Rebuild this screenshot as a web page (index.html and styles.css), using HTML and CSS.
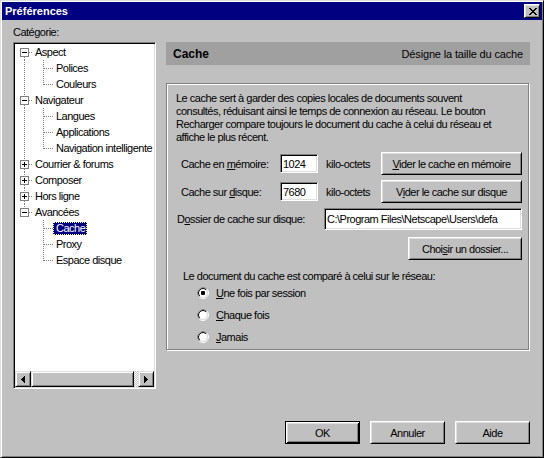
FILE: index.html
```html
<!DOCTYPE html>
<html lang="fr">
<head>
<meta charset="utf-8">
<title>Préférences</title>
<link rel="stylesheet" href="styles.css">
</head>
<body>
<svg class="defs" width="0" height="0" aria-hidden="true">
  <defs>
    <clipPath id="tl"><polygon points="0,0 12,0 0,12"/></clipPath>
    <symbol id="radio" viewBox="0 0 12 12">
      <circle cx="6" cy="6" r="5.5" fill="none" stroke="#fff"/>
      <circle cx="6" cy="6" r="5.5" fill="none" stroke="#808080" clip-path="url(#tl)"/>
      <circle cx="6" cy="6" r="4.5" fill="#fff" stroke="#dfdfdf"/>
      <circle cx="6" cy="6" r="4.5" fill="none" stroke="#000" clip-path="url(#tl)"/>
    </symbol>
  </defs>
</svg>
<div class="window">
  <div class="titlebar">
    <span class="title">Préférences</span>
    <span class="close"><svg width="8" height="7" viewBox="0 0 8 7" shape-rendering="crispEdges"><path d="M0 0h2v1H0zM6 0h2v1H6zM1 1h2v1H1zM5 1h2v1H5zM2 2h4v1H2zM3 3h2v1H3zM2 4h4v1H2zM1 5h2v1H1zM5 5h2v1H5zM0 6h2v1H0zM6 6h2v1H6z" fill="#000"/></svg></span>
  </div>
  <div class="main">
    <div class="cat-label">Catégorie:</div>
    <div class="tree">
      <div class="rows">
        <div class="row"><svg class="g1" width="17" height="16" shape-rendering="crispEdges"><line x1="9.5" y1="13" x2="9.5" y2="16" class="dot"/><line x1="14" y1="8.5" x2="17" y2="8.5" class="dot"/><rect x="5.5" y="4.5" width="8" height="8" fill="#fff" stroke="#808080"/><rect x="7" y="8" width="5" height="1"/></svg><span class="lbl">Aspect</span></div>
        <div class="row"><svg class="g2" width="38" height="16" shape-rendering="crispEdges"><line x1="9.5" y1="0" x2="9.5" y2="16" class="dot"/><line x1="28.5" y1="0" x2="28.5" y2="16" class="dot"/><line x1="29" y1="8.5" x2="38" y2="8.5" class="dot"/></svg><span class="lbl">Polices</span></div>
        <div class="row"><svg class="g2" width="38" height="16" shape-rendering="crispEdges"><line x1="9.5" y1="0" x2="9.5" y2="16" class="dot"/><line x1="28.5" y1="0" x2="28.5" y2="9" class="dot"/><line x1="29" y1="8.5" x2="38" y2="8.5" class="dot"/></svg><span class="lbl">Couleurs</span></div>
        <div class="row"><svg class="g1" width="17" height="16" shape-rendering="crispEdges"><line x1="9.5" y1="0" x2="9.5" y2="4" class="dot"/><line x1="9.5" y1="13" x2="9.5" y2="16" class="dot"/><line x1="14" y1="8.5" x2="17" y2="8.5" class="dot"/><rect x="5.5" y="4.5" width="8" height="8" fill="#fff" stroke="#808080"/><rect x="7" y="8" width="5" height="1"/></svg><span class="lbl">Navigateur</span></div>
        <div class="row"><svg class="g2" width="38" height="16" shape-rendering="crispEdges"><line x1="9.5" y1="0" x2="9.5" y2="16" class="dot"/><line x1="28.5" y1="0" x2="28.5" y2="16" class="dot"/><line x1="29" y1="8.5" x2="38" y2="8.5" class="dot"/></svg><span class="lbl">Langues</span></div>
        <div class="row"><svg class="g2" width="38" height="16" shape-rendering="crispEdges"><line x1="9.5" y1="0" x2="9.5" y2="16" class="dot"/><line x1="28.5" y1="0" x2="28.5" y2="16" class="dot"/><line x1="29" y1="8.5" x2="38" y2="8.5" class="dot"/></svg><span class="lbl">Applications</span></div>
        <div class="row"><svg class="g2" width="38" height="16" shape-rendering="crispEdges"><line x1="9.5" y1="0" x2="9.5" y2="16" class="dot"/><line x1="28.5" y1="0" x2="28.5" y2="9" class="dot"/><line x1="29" y1="8.5" x2="38" y2="8.5" class="dot"/></svg><span class="lbl">Navigation intelligente</span></div>
        <div class="row"><svg class="g1" width="17" height="16" shape-rendering="crispEdges"><line x1="9.5" y1="0" x2="9.5" y2="4" class="dot"/><line x1="9.5" y1="13" x2="9.5" y2="16" class="dot"/><line x1="14" y1="8.5" x2="17" y2="8.5" class="dot"/><rect x="5.5" y="4.5" width="8" height="8" fill="#fff" stroke="#808080"/><rect x="7" y="8" width="5" height="1"/><rect x="9" y="6" width="1" height="5"/></svg><span class="lbl">Courrier &amp; forums</span></div>
        <div class="row"><svg class="g1" width="17" height="16" shape-rendering="crispEdges"><line x1="9.5" y1="0" x2="9.5" y2="4" class="dot"/><line x1="9.5" y1="13" x2="9.5" y2="16" class="dot"/><line x1="14" y1="8.5" x2="17" y2="8.5" class="dot"/><rect x="5.5" y="4.5" width="8" height="8" fill="#fff" stroke="#808080"/><rect x="7" y="8" width="5" height="1"/><rect x="9" y="6" width="1" height="5"/></svg><span class="lbl">Composer</span></div>
        <div class="row"><svg class="g1" width="17" height="16" shape-rendering="crispEdges"><line x1="9.5" y1="0" x2="9.5" y2="4" class="dot"/><line x1="9.5" y1="13" x2="9.5" y2="16" class="dot"/><line x1="14" y1="8.5" x2="17" y2="8.5" class="dot"/><rect x="5.5" y="4.5" width="8" height="8" fill="#fff" stroke="#808080"/><rect x="7" y="8" width="5" height="1"/><rect x="9" y="6" width="1" height="5"/></svg><span class="lbl">Hors ligne</span></div>
        <div class="row"><svg class="g1" width="17" height="16" shape-rendering="crispEdges"><line x1="9.5" y1="0" x2="9.5" y2="4" class="dot"/><line x1="14" y1="8.5" x2="17" y2="8.5" class="dot"/><rect x="5.5" y="4.5" width="8" height="8" fill="#fff" stroke="#808080"/><rect x="7" y="8" width="5" height="1"/></svg><span class="lbl">Avancées</span></div>
        <div class="row"><svg class="g2" width="38" height="16" shape-rendering="crispEdges"><line x1="28.5" y1="0" x2="28.5" y2="16" class="dot"/><line x1="29" y1="8.5" x2="38" y2="8.5" class="dot"/></svg><span class="lbl sel">Cache</span></div>
        <div class="row"><svg class="g2" width="38" height="16" shape-rendering="crispEdges"><line x1="28.5" y1="0" x2="28.5" y2="16" class="dot"/><line x1="29" y1="8.5" x2="38" y2="8.5" class="dot"/></svg><span class="lbl">Proxy</span></div>
        <div class="row"><svg class="g2" width="38" height="16" shape-rendering="crispEdges"><line x1="28.5" y1="0" x2="28.5" y2="9" class="dot"/><line x1="29" y1="8.5" x2="38" y2="8.5" class="dot"/></svg><span class="lbl">Espace disque</span></div>
      </div>
      <div class="hscroll">
        <span class="sb-btn"><svg width="4" height="7" viewBox="0 0 4 7" shape-rendering="crispEdges"><path d="M0 3h1v1H0zM1 2h1v3H1zM2 1h1v5H2zM3 0h1v7H3z"/></svg></span>
        <span class="sb-thumb"></span>
        <span class="sb-track"></span>
        <span class="sb-btn"><svg width="4" height="7" viewBox="0 0 4 7" shape-rendering="crispEdges"><path d="M3 3h1v1H3zM2 2h1v3H2zM1 1h1v5H1zM0 0h1v7H0z"/></svg></span>
      </div>
    </div>
    <div class="panel">
      <div class="header"><span class="h-title">Cache</span><span class="h-desc">Désigne la taille du cache</span></div>
      <div class="group">
        <p class="intro">Le cache sert à garder des copies locales de documents souvent<br>consultés, réduisant ainsi le temps de connexion au réseau. Le bouton<br>Recharger compare toujours le document du cache à celui du réseau et<br>affiche le plus récent.</p>
        <div class="frow r1">
          <span class="flabel">Cache en <u>m</u>émoire:</span>
          <input class="field small" type="text" value="1024">
          <span class="unit">kilo-octets</span>
          <button class="btn wide"><u>V</u>ider le cache en mémoire</button>
        </div>
        <div class="frow r2">
          <span class="flabel">Cache sur <u>d</u>isque:</span>
          <input class="field small" type="text" value="7680">
          <span class="unit">kilo-octets</span>
          <button class="btn wide">V<u>i</u>der le cache sur disque</button>
        </div>
        <div class="frow r3">
          <span class="flabel dlabel">D<u>o</u>ssier de cache sur disque:</span>
          <input class="field path" type="text" value="C:\Program Files\Netscape\Users\defa">
        </div>
        <div class="frow r4">
          <button class="btn choose">Choi<u>s</u>ir un dossier...</button>
        </div>
        <p class="compare">Le document du cache est comparé à celui sur le réseau:</p>
        <div class="radio-row first"><span class="radio on"><svg width="12" height="12"><use href="#radio"/><rect x="4" y="4" width="4" height="4" rx="1" fill="#000"/></svg></span><span><u>U</u>ne fois par session</span></div>
        <div class="radio-row"><span class="radio"><svg width="12" height="12"><use href="#radio"/></svg></span><span><u>C</u>haque fois</span></div>
        <div class="radio-row"><span class="radio"><svg width="12" height="12"><use href="#radio"/></svg></span><span><u>J</u>amais</span></div>
      </div>
    </div>
  </div>
  <div class="footer">
    <button class="btn dlg default">OK</button>
    <button class="btn dlg">Annuler</button>
    <button class="btn dlg">Aide</button>
  </div>
</div>
</body>
</html>
```

FILE: styles.css
```css
* { box-sizing: border-box; }
html, body { margin: 0; padding: 0; }
body {
  width: 544px; height: 458px; overflow: hidden;
  font-family: "Liberation Sans", Arial, sans-serif;
  font-size: 11px; color: #000; background: #c0c0c0;
  letter-spacing: -0.5px;
}
.defs { position: absolute; width: 0; height: 0; }
.window {
  width: 544px; height: 458px; background: #c0c0c0;
  border: 1px solid; border-color: #dfdfdf #000 #000 #dfdfdf;
  box-shadow: inset 1px 1px #fff, inset -1px -1px #808080;
  padding: 1px;
  display: flex; flex-direction: column;
}
.titlebar {
  height: 18px; background: #000080; color: #fff;
  display: flex; align-items: center; justify-content: space-between;
  padding: 0 2px 0 3px;
}
.title { font-weight: bold; font-size: 11px; letter-spacing: 0; }
.close {
  width: 16px; height: 14px; background: #c0c0c0;
  border: 1px solid; border-color: #fff #000 #000 #fff;
  box-shadow: inset 1px 1px #dfdfdf, inset -1px -1px #808080;
  display: flex; align-items: center; justify-content: center;
  padding-left: 1px;
}
.close svg { display: block; }
.main {
  display: grid;
  grid-template-columns: 143px 364px;
  grid-template-rows: 16px 347px;
  column-gap: 10px;
  padding: 6px 0 0 11px;
}
.cat-label { grid-column: 1; grid-row: 1; line-height: 13px; }
.tree {
  grid-column: 1; grid-row: 2;
  background: #fff;
  border: 1px solid; border-color: #808080 #fff #fff #808080;
  box-shadow: inset 1px 1px #000, inset -1px -1px #dfdfdf;
  padding: 1px;
  display: flex; flex-direction: column;
}
.rows { flex: 1; overflow: hidden; }
.row { display: flex; align-items: center; height: 16px; white-space: nowrap; }
.row svg { flex: none; display: block; }
.dot { stroke: #808080; stroke-width: 1; stroke-dasharray: 1 1; }
.lbl {
  display: inline-block; height: 13px; line-height: 11px;
  padding: 0 1px 0 2px; border: 1px dotted transparent;
}
.lbl.sel { background: #000080; color: #fff; border-color: #ffff80; }
.hscroll { display: flex; height: 16px; flex: none; }
.sb-btn, .sb-thumb {
  background: #c0c0c0;
  border: 1px solid; border-color: #dfdfdf #000 #000 #dfdfdf;
  box-shadow: inset 1px 1px #fff, inset -1px -1px #808080;
}
.sb-btn { width: 16px; height: 16px; display: flex; align-items: center; justify-content: center; flex: none; }
.sb-btn svg { display: block; }
.sb-thumb { width: 103px; height: 16px; flex: none; }
.sb-track {
  flex: 1; height: 16px;
  background: repeating-conic-gradient(#c0c0c0 0 25%, #fff 0 50%) 0 0 / 2px 2px;
}
.panel { grid-column: 2; grid-row: 2; display: flex; flex-direction: column; }
.header {
  height: 23px; background: #a0a0a0;
  display: flex; align-items: center; justify-content: space-between;
  padding: 0 7px;
}
.h-title { font-weight: bold; font-size: 12px; letter-spacing: 0; }
.h-desc { letter-spacing: -0.15px; }
.group {
  margin-top: 18px; height: 267px; width: 363px;
  border: 1px solid #808080;
  box-shadow: inset 1px 1px #fff, 1px 1px #fff;
  padding: 8px 6px 0 9px;
}
.intro { margin: 0; line-height: 13px; white-space: nowrap; }
.frow { display: flex; align-items: center; height: 23px; }
.r1 { margin-top: 8px; }
.r2 { margin-top: 5px; }
.r3 { margin-top: 5px; height: 22px; }
.r4 { margin-top: 7px; justify-content: flex-end; }
.flabel { width: 104px; padding-left: 5px; white-space: nowrap; flex: none; }
.dlabel { width: 148px; padding-left: 1px; }
.field {
  background: #fff;
  border: 1px solid; border-color: #808080 #fff #fff #808080;
  box-shadow: inset 1px 1px #000, inset -1px -1px #dfdfdf;
  font: inherit; letter-spacing: inherit; color: #000;
  padding: 0 0 0 2px; margin: 0; outline: none;
}
.field.small { width: 38px; height: 19px; flex: none; }
.field.path { flex: 1; min-width: 0; height: 22px; }
.unit { margin-left: 8px; white-space: nowrap; }
.btn {
  background: #c0c0c0; color: #000;
  font: inherit; letter-spacing: inherit;
  border: 1px solid; border-color: #fff #000 #000 #fff;
  box-shadow: inset 1px 1px #dfdfdf, inset -1px -1px #808080;
  padding: 0; margin: 0; height: 23px;
  white-space: nowrap;
}
.btn.wide { width: 141px; margin-left: auto; }
.btn.choose { width: 114px; }
.compare { margin: 10px 0 0 7px; line-height: 13px; white-space: nowrap; }
.radio-row { display: flex; align-items: center; height: 22px; padding-left: 21px; gap: 7px; }
.radio-row.first { margin-top: -1px; }
.radio { width: 12px; height: 12px; display: block; flex: none; }
.radio svg { display: block; }
.footer {
  display: flex; justify-content: flex-end; gap: 10px;
  padding: 32px 12px 0 0;
}
.btn.dlg { width: 75px; }
.btn.default {
  border: 1px solid #000;
  box-shadow: inset 1px 1px #fff, inset -1px -1px #000, inset 2px 2px #dfdfdf, inset -2px -2px #808080;
}
```
